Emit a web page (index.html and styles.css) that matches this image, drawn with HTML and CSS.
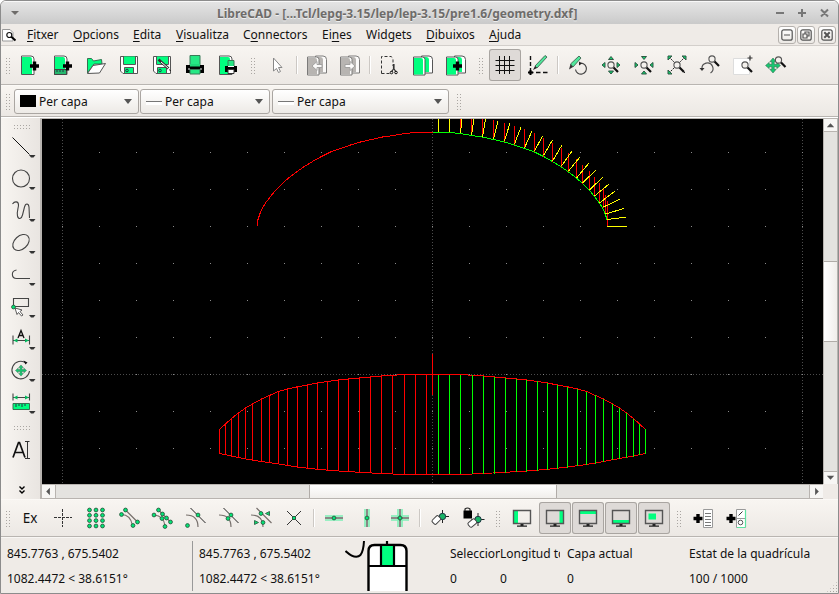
FILE: index.html
```html
<!DOCTYPE html>
<html lang="ca">
<head>
<meta charset="utf-8">
<title>LibreCAD</title>
<link rel="stylesheet" href="styles.css">
</head>
<body>
<svg class="defs" aria-hidden="true">
  <defs>
    <g id="node"><circle r="1.9" fill="#00e676" stroke="#2c5a40" stroke-width=".9"/></g>
    <g id="lens"><path d="M2.3 2.3L7 7" stroke="#111" stroke-width="2.2"/><circle r="3.1" fill="#f4f1ed" stroke="#555" stroke-width="1.1"/></g>
    <g id="pages"><path d="M14.5 7H22q3.500 0 3.500 3.500V24h-11z" fill="#fff" stroke="#555"/><path d="M15 8h4q3 0 3 3v12h-7z" class="tint"/><path d="M6.500 8h9q2.500 0 2.500 2.500V26H6.500z" fill="#fff" stroke="#555"/><path d="M7 9h7q2 0 2 2v14.500H7z" class="tint"/></g>
    <g id="screen"><path d="M7.500 8.500h17v13h-17z" fill="none" stroke="#555" stroke-width="1.400"/><path d="M14.500 22h3v1.500h3.500v1.300H11v-1.300h3.500z" fill="#222"/></g>
    <g id="drop"><path d="M24 24h6.500l-2 2.500h-2.500z" fill="#333"/></g>
    <g id="move"><path d="M0-6.200l2.600 3H1v2.200h2.200V-2.600l3 2.600-3 2.600V1H1v2.200h1.600L0 6.200l-2.600-3H-1V1h-2.200v1.600L-6.200 0l3-2.600V-1H-1v-2.200h-1.600z" fill="#18c872" stroke="#326b4e" stroke-width=".5"/></g>
    <g id="plus"><path d="M-1.700-4.500h3.400v2.800h2.800v3.400H1.700v2.800h-3.400V1.700h-2.800v-3.400h2.800z" fill="#000"/></g>
    <pattern id="grid" x="62" y="115" width="37" height="37" patternUnits="userSpaceOnUse"><path d="M0 0h1v1H0z" fill="#8a8a8a"/></pattern>
  </defs>
</svg>
<div class="window">
  <header class="titlebar">
    <svg class="wm-menu" viewBox="0 0 10 6"><path d="M1 1h8L5 5z"/></svg>
    <h1>LibreCAD - [...Tcl/lepg-3.15/lep/lep-3.15/pre1.6/geometry.dxf]</h1>
    <svg class="wm-buttons" viewBox="0 0 54 12"><path d="M1 6h8M23 6h8M27 2v8M46 2.500l7 7M53 2.500l-7 7"/></svg>
  </header>

  <nav class="menubar">
    <svg class="doc-icon" viewBox="0 0 15 15"><path d="M.5 1.500H8l3 3v8.500H.5z" fill="#fff" stroke="#999"/><path d="M9 8.500l4.500 4" stroke="#000" stroke-width="2"/><circle cx="7.300" cy="7" r="2.500" fill="#fff" stroke="#111" stroke-width="1.200"/></svg>
    <span class="m1"><u>F</u>itxer</span><span class="m2"><u>O</u>pcions</span><span class="m3"><u>E</u>dita</span><span class="m4"><u>V</u>isualitza</span><span class="m5">C<u>o</u>nnectors</span><span class="m6">Ei<u>n</u>es</span><span class="m7">Widgets</span><span class="m8"><u>D</u>ibuixos</span><span class="m9"><u>A</u>juda</span>
    <div class="mdi">
      <b><svg viewBox="0 0 12 12"><rect x=".8" y=".8" width="10.400" height="10.400" rx="2"/><path d="M3 6h6"/></svg></b>
      <b><svg viewBox="0 0 12 12"><rect x=".8" y=".8" width="10.400" height="10.400" rx="2"/><path d="M3 5h4v4H3zM5 5V3h4v4H7"/></svg></b>
      <b><svg viewBox="0 0 12 12"><rect x=".8" y=".8" width="10.400" height="10.400" rx="2"/><path d="M3.300 3.300l5.400 5.400M8.700 3.300L3.300 8.700" stroke-width="2"/></svg></b>
    </div>
  </nav>

  <section class="toolbar top">
    <i class="grip"></i>
    <svg class="icon" viewBox="0 0 32 32"><path d="M7.500 7H17q3 0 3 3v15.500H7.500z" fill="#fff" stroke="#555"/><path d="M8 8h8q2 0 2 2v15H8z" fill="#00ff7f"/><use href="#plus" x="20.500" y="17"/></svg>
    <svg class="icon" viewBox="0 0 32 32"><path d="M7.500 7H17q3 0 3 3v15.500H7.500z" fill="#fff" stroke="#555"/><path d="M8 8h8q2 0 2 2v15H8z" fill="#00ff7f"/><path d="M7.500 20.500h12v5h-12z" fill="#26b86e" stroke="#444"/><path d="M10 21v2M13 21v2M16 21v2" stroke="#234"/><use href="#plus" x="20.500" y="17"/></svg>
    <svg class="icon" viewBox="0 0 32 32"><path d="M7.500 24V9.500h4l2 2.500 8-1.500.5 4.500h-8z" fill="#00ff7f" stroke="#357152"/><path d="M7.500 24.500l5.500-8 12.500-2-6 9.500z" fill="#fff" stroke="#555"/></svg>
    <svg class="icon" viewBox="0 0 32 32"><path d="M7.500 7.500h17v17H10l-2.500-2.500z" fill="#fff" stroke="#555"/><path d="M11 7.500h11V15H11z" fill="#00ff7f"/><path d="M10.500 8v7.500h12V8" fill="none" stroke="#555"/><path d="M11.500 24.500v-6h9v6z" fill="#00ff7f" stroke="#555"/><circle cx="14" cy="21.500" r="1.300" fill="none" stroke="#234"/></svg>
    <svg class="icon" viewBox="0 0 32 32"><path d="M7.500 7.500h17v17H10l-2.500-2.500z" fill="#fff" stroke="#555"/><path d="M11 7.500h11V15H11z" fill="#00ff7f"/><path d="M10.500 8v7.500h12V8" fill="none" stroke="#555"/><path d="M11.500 24.500v-6h9v6z" fill="#00ff7f" stroke="#555"/><circle cx="14" cy="21.500" r="1.300" fill="none" stroke="#234"/><path d="M12.500 10.500l10 9" stroke="#333" stroke-width="2.600"/><path d="M15 13l7.500 6.500" stroke="#fff"/><path d="M23.500 20.500l1 1.500" stroke="#111"/></svg>
    <svg class="icon" viewBox="0 0 32 32"><path d="M11 17V6.500h10V17" fill="#26e884" stroke="#397b58"/><path d="M7 16h18v8H7z" fill="#000"/><path d="M11 15h10v2.500H11z" fill="#1fd879"/><path d="M11 25v-4.500h10V25z" fill="#26e884" stroke="#397b58"/><path d="M9 20h2M21 20h2" stroke="#eee"/></svg>
    <svg class="icon" viewBox="0 0 32 32"><path d="M7.500 7H17q3 0 3 3v15.500H7.500z" fill="#fff" stroke="#555"/><path d="M8 8h8q2 0 2 2v15H8z" fill="#00ff7f"/><path d="M16 17v-5.500h6V17" fill="#26e884" stroke="#397b58"/><path d="M13 17h12v6H13z"/><path d="M16 20.500h6v4h-6z" fill="#fff" stroke="#333"/><path d="M16 17.500h6" stroke="#fff"/></svg>
    <i class="grip"></i>
    <svg class="icon" viewBox="0 0 32 32"><path d="M12.500 9v13l3-2.500 2 4 2-1-2-4h3.500z" fill="#fff" stroke="#888"/></svg>
    <i class="sep"></i>
    <svg class="icon off" viewBox="0 0 32 32"><use href="#pages"/><path d="M11 17l5-4.500v3h5v3h-5v3z" fill="#fff" stroke="#888"/></svg>
    <svg class="icon off" viewBox="0 0 32 32"><use href="#pages"/><path d="M21 17l-5-4.500v3h-5v3h5v3z" fill="#fff" stroke="#888"/></svg>
    <i class="sep"></i>
    <svg class="icon" viewBox="0 0 32 32"><path d="M7.500 24.500V7.500H17q2 1 2 3.500V17" fill="none" stroke="#333" stroke-dasharray="3 2"/><path d="M7.500 24.500H17" stroke="#333" stroke-dasharray="3 2"/><path d="M19.500 15v4l2.500 4M20 15v4l-2.500 4" fill="none" stroke="#333" stroke-width="1.200"/><circle cx="17.500" cy="23.500" r="1.300" fill="none" stroke="#111"/><circle cx="22" cy="23.500" r="1.300" fill="none" stroke="#111"/></svg>
    <svg class="icon" viewBox="0 0 32 32"><use href="#pages"/></svg>
    <svg class="icon" viewBox="0 0 32 32"><use href="#pages"/><use href="#plus" x="17.500" y="17"/></svg>
    <i class="grip"></i>
    <svg class="icon checked" viewBox="0 0 32 32"><path d="M10.500 7v18M15.500 7v18M20.500 7v18M6.500 11.500h19M6.500 16.500h19M6.500 21.500h19" stroke="#111"/></svg>
    <svg class="icon" viewBox="0 0 32 32"><path d="M8.500 7v16" stroke="#111" stroke-width="1.400" stroke-dasharray="4 2"/><path d="M7 23.500h19" stroke="#111" stroke-width="1.500" stroke-dasharray="4.500 2.500"/><path d="M8.500 21v5M6 23.500h5" stroke="#000" stroke-width="2"/><path d="M13 17L23 6.500l2 1.500-10 11z" fill="#50e69a" stroke="#345344" stroke-width=".8"/><path d="M15 19l-4 2 2-4" fill="#222"/></svg>
    <i class="sep"></i>
    <svg class="icon" viewBox="0 0 32 32"><path d="M8.500 15L17 7l2 2-8 9z" fill="#50e69a" stroke="#345344" stroke-width=".8"/><path d="M11 18l-4 2.500L8.500 15z" fill="#333"/><path d="M17 14.500a5.500 5.500 0 1 1-3.500 6" fill="none" stroke="#444" stroke-width="1.200"/><path d="M17 12.500l3 2-3 2z" fill="#222"/></svg>
    <svg class="icon" viewBox="0 0 32 32"><g fill="#10ce6d" stroke="#315744"><path d="M16 7.500l2.500 3h-5zM16 25l2.500-3h-5zM7 16l3-2.500v5zM25 16l-3-2.500v5z"/></g><use href="#lens" x="16" y="16"/></svg>
    <svg class="icon" viewBox="0 0 32 32"><g fill="#10ce6d" stroke="#315744"><path d="M16 10.500l2.500-3h-5zM16 22l2.500 3h-5zM10 16l-3-2.500v5zM22 16l3-2.500v5z"/></g><use href="#lens" x="16" y="16"/></svg>
    <svg class="icon" viewBox="0 0 32 32"><path d="M8 8l16 16M24 8L8 24" stroke="#222" stroke-dasharray="2 1"/><g fill="#10ce6d" stroke="#315744"><path d="M7 7h4l-4 4zM25 7h-4l4 4zM7 25h4l-4-4z"/></g><use href="#lens" x="16" y="16"/></svg>
    <svg class="icon" viewBox="0 0 32 32"><path d="M8 20a5.500 5.500 0 1 1 8.500 4" fill="none" stroke="#555" stroke-width="1.200"/><path d="M5.500 19h5L8 22z" fill="#333"/><use href="#lens" x="18" y="10"/></svg>
    <svg class="icon" viewBox="0 0 32 32"><path d="M6.500 9.500h16v16h-16z" fill="#fff" stroke="#ddd"/><use href="#lens" x="18" y="16"/><path d="M23 6.500v5M20.500 9h5" stroke="#333" stroke-width="1.200"/></svg>
    <svg class="icon" viewBox="0 0 32 32"><g transform="translate(13 16.500) scale(1.200)"><use href="#move"/></g><use href="#lens" x="18.500" y="11"/></svg>
  </section>

  <section class="toolbar pens">
    <i class="grip"></i>
    <div class="combo c1"><i class="swatch"></i>Per capa<i class="arrow"></i></div>
    <div class="combo c2"><i class="line"></i>Per capa<i class="arrow"></i></div>
    <div class="combo c3"><i class="line"></i>Per capa<i class="arrow"></i></div>
    <i class="grip"></i>
  </section>

  <main>
    <aside>
      <i class="grip wide"></i>
      <svg class="icon" viewBox="0 0 32 32"><path d="M7.500 6.500l17 17" stroke="#111"/><use href="#drop"/></svg>
      <svg class="icon" viewBox="0 0 32 32"><circle cx="16" cy="15.500" r="8.500" class="ln"/><use href="#drop"/></svg>
      <svg class="icon" viewBox="0 0 32 32"><path d="M7.500 9c2-3 6-3 6 1 0 3-2 7-1 11 1 4 4 3 5-1l2-8c1-4 4-4 4.500 0l.5 11" class="ln"/><use href="#drop"/></svg>
      <svg class="icon" viewBox="0 0 32 32"><ellipse cx="16" cy="15.500" rx="9.500" ry="6.500" transform="rotate(-43 16 15.500)" class="ln"/><use href="#drop"/></svg>
      <svg class="icon" viewBox="0 0 32 32"><path d="M11.500 11c-6 1-5 8.500 0 8.500H25" class="ln"/><use href="#drop"/></svg>
      <svg class="icon" viewBox="0 0 32 32"><path d="M8.500 7.500h15v8h-15z" class="ln"/><path d="M10 17l7 2-2 1.500 3 3.500-1.500 1-3-3.500-1.500 2z" fill="#fff" stroke="#333" stroke-width=".8"/><use href="#node" x="8.500" y="16"/><use href="#drop"/></svg>
      <svg class="icon" viewBox="0 0 32 32"><path d="M8 12.500v9M24.500 12.500v9M8 17.500h16" class="ln"/><path d="M8.500 17.500l4-2v4zM24 17.500l-4-2v4z" fill="#00b85c"/><path d="M13 15l3-7.500 3 7.500M14.200 12.500h3.600" fill="none" stroke="#111" stroke-width="1.300"/><use href="#drop"/></svg>
      <svg class="icon" viewBox="0 0 32 32"><path d="M21 8a8.800 8.800 0 1 0 3.500 8" class="ln"/><path d="M18.500 5.500l4 2-2 2z" fill="#111"/><g transform="translate(16 15.500) scale(.9)"><use href="#move"/></g><use href="#drop"/></svg>
      <svg class="icon" viewBox="0 0 32 32"><path d="M8 6.500v7M24.500 6.500v7M8 10.500h16" class="ln"/><path d="M8.500 10.500l4-2v4zM24 10.500l-4-2v4z" fill="#00b85c"/><path d="M8 16.500h16.500v6H8z" fill="#00ff7f" stroke="#357152"/><path d="M11 17v3M14 17v2M17 17v3M20 17v2" stroke="#234"/><use href="#drop"/></svg>
      <i class="grip wide"></i>
      <svg class="icon" viewBox="0 0 32 32"><path d="M8 23.500L13.500 8.500h1L20 23.500M10 18.500h8" fill="none" stroke="#111" stroke-width="1.700"/><path d="M20 7.500h4.500M22.500 7.500v17M20 24.500h5" fill="none" stroke="#333"/></svg>
      <svg class="more" viewBox="0 0 8 8"><path d="M1.500.5L4 3 6.500.5M1.500 4.500L4 7l2.500-2.500"/></svg>
    </aside>
    <div class="view">
      <svg class="drawing" viewBox="42 119 781 365" shape-rendering="crispEdges">
        <path d="M42 119h781v365H42z" fill="#000"/>
        <path d="M62.500 119v365M432.500 119v365M802.500 119v365M42 374.500h781" stroke="#4c4c4c" stroke-dasharray="1 2"/>
        <path d="M42 119h781v365H42z" fill="url(#grid)"/>
        <g fill="none" stroke-width="1">
          <path stroke="#f00" d="M432.500 132.500H415L404.500 133.500 393.500 135.500 382.500 137 371.500 139.500 360.500 142 350.500 145 340.500 148.500 330.500 152 321.500 156.500 312.500 161.500 303.500 167 296.500 172 288.500 178 282.500 183.500 275.500 190.500 270.500 196.500 265.500 203 261.500 209.500 259.500 215 257.500 221V226"/>
          <path stroke="#0f0" d="M432.500 132.500H450L460.500 133.500 471.500 135.500 482.500 137 493.500 139.500 504.500 142 514.500 145 524.500 148.500 534.500 152 543.500 156.500 552.500 161.500 561.500 167 568.500 172 576.500 178 582.500 183.500 589.500 190.500 594.500 196.500 599.500 203 603.500 209.500 605.500 215 607.500 221V226"/>
          <path stroke="#f00" d="M460.500 133v-14M471.500 135v-16M482.500 137v-18M493.500 139v-19M504.500 142v-19M514.500 145v-19M524.500 148v-19M534.500 152v-19M543.500 157v-19M552.500 162v-19M561.500 167v-19M568.500 172v-19M576.500 178v-19M582.500 184v-19M589.500 190v-19M594.500 196v-19M599.500 202v-19M603.500 208v-19M605.500 214v-19M607.500 226v-25"/>
          <path stroke="#ff0" d="M438.500 132v-13M449.500 132v-13M460.500 133l1.500-14M471.500 135l2.500-16M482.500 137l3-18M493.500 139l4.500-18M504.500 141l5.500-18M514.500 144l6.500-17M524.500 148l7.500-17M534.500 151l8-15M543.500 155.500l9-15.500M552.500 161l9.500-16M561.500 166l10.500-15M568.500 171l11.500-14M576.500 178l12.500-15M582.500 183l13.500-13M589.500 190l13.500-13M594.500 196l14.500-12M599.500 203l15.500-12M603.500 207l16.500-8M605.500 214l18.500-5.500M607.500 219.500l18.500-2.500M607 226.500h20"/>
          <path stroke="#f00" d="M219.500 453.500V429.500M225.500 455V424M231.500 456V418.500M238.500 457V413M245.500 459V408M252.500 460V404M261.500 461V399M269.500 463V395M278.500 464V391.500M287.500 466V389M297.500 467.500V387M307.500 468V385M317.500 469V383M327.500 470V381M338.500 471V380M348.500 471.500V379M359.500 472V378M370.500 473V377M381.500 473.500V376M392.500 474V375M404.500 474V374M415.500 474V374M426.500 474V374M432.500 354v41"/>
          <path stroke="#f00" d="M219.500 453.500V429.500L225.500 424 231.500 418.500 238.500 413 245.500 408 252.500 404 261.500 399 269.500 395.500 278.500 391.500 287.500 389 297.500 386.800 307.500 385 317.500 383 327.500 381.500 338.500 380 348.500 379 359.500 378 370.500 377 381.500 376 392.500 375.300 404.500 374.500H460.500L472.500 375.300 483.500 376 494.500 377 505.500 378 516.500 379 526.500 380 537.500 381.500 547.500 383 557.500 385 567.500 386.800 577.500 389 586.500 391.500 595.500 395.500 603.500 399 612.500 404 619.500 408 626.500 413 633.500 418.500 639.500 424 645.500 429.500"/>
          <path stroke="#f00" d="M219.500 453.500L231.500 456 245.500 459 261.500 461.500 278.500 464 297.500 467 317.500 469.300 338.500 471 359.500 472.300 381.500 473.500 404.500 474.500H460.500L483.500 473.500 505.500 472.300 526.500 471 547.500 469.300 567.500 467 586.500 464.500 603.500 461.500 619.500 458.500 633.500 456 645.500 453.500"/>
          <path stroke="#0f0" d="M438.500 375v99M449.500 375v99M460.500 375v99M472.500 375v99M483.500 376v98M494.500 377v97M505.500 378v95M516.500 379v93M526.500 380v92M537.500 381v90M547.500 383v87M557.500 385v84M567.500 387v81M577.500 389v77M586.500 392v73M595.500 395v69M603.500 399v63M612.500 404v56M619.500 408v51M626.500 413v45M633.500 419v38M639.500 424v31M645.500 429v25"/>
        </g>
      </svg>
      <div class="vscroll"><svg viewBox="0 0 14 13"><path d="M3 9h8L7 4.500z"/></svg><i></i><b></b><i></i><svg viewBox="0 0 14 13"><path d="M3 4h8L7 8.500z"/></svg></div>
      <div class="hscroll"><svg viewBox="0 0 13 14"><path d="M8 3v8L4 7z"/></svg><i></i><b></b><i></i><svg viewBox="0 0 13 14"><path d="M5 3v8l4-4z"/></svg></div>
      <div class="corner"></div>
    </div>
  </main>

  <section class="toolbar snap">
    <i class="grip"></i>
    <span class="icon ex">Ex</span>
    <svg class="icon" viewBox="0 0 32 32"><path d="M7 15.500h18M15.500 7v18" stroke="#333" stroke-dasharray="3 1"/></svg>
    <svg class="icon" viewBox="0 0 32 32"><use href="#node" x="9.500" y="8"/><use href="#node" x="16" y="8"/><use href="#node" x="22.500" y="8"/><use href="#node" x="9.500" y="13.300"/><use href="#node" x="16" y="13.300"/><use href="#node" x="22.500" y="13.300"/><use href="#node" x="9.500" y="18.600"/><use href="#node" x="16" y="18.600"/><use href="#node" x="22.500" y="18.600"/><use href="#node" x="9.500" y="24"/><use href="#node" x="16" y="24"/><use href="#node" x="22.500" y="24"/></svg>
    <svg class="icon" viewBox="0 0 32 32"><path d="M12.500 8l12 12M8.500 12.500q9 0 11 11" class="gr"/><use href="#node" x="12.500" y="8"/><use href="#node" x="8.500" y="12.500"/><use href="#node" x="24.500" y="20"/><use href="#node" x="20" y="23.500"/></svg>
    <svg class="icon" viewBox="0 0 32 32"><path d="M12.500 8l12 12M8 13q10 1 11 11" class="gr"/><use href="#node" x="12.500" y="8"/><use href="#node" x="8" y="13"/><use href="#node" x="16.500" y="12"/><use href="#node" x="20.500" y="16"/><use href="#node" x="16" y="16.500"/><use href="#node" x="24.500" y="20"/><use href="#node" x="19" y="24.500"/></svg>
    <svg class="icon" viewBox="0 0 32 32"><path d="M11.500 6l15 15" stroke="#222"/><path d="M7 13q12 0 12 12" class="gr"/><use href="#node" x="19" y="13"/><use href="#node" x="8.500" y="23.500"/></svg>
    <svg class="icon" viewBox="0 0 32 32"><path d="M11.500 6l15 15" stroke="#222"/><path d="M7 13q12 0 12 12" class="gr"/><use href="#node" x="19" y="13"/><use href="#node" x="16" y="16.500"/></svg>
    <svg class="icon" viewBox="0 0 32 32"><path d="M11.500 6l15 15M6 13q12 0 12 12" class="gr"/><use href="#node" x="16" y="11.500"/><use href="#node" x="18" y="20.500"/><path d="M24.500 9.500v4l-4-2zM9.500 18.500v4l4-2z" fill="#0bdc6e" stroke="#357152"/></svg>
    <svg class="icon" viewBox="0 0 32 32"><path d="M9 9l14 14M23 9L9 23" stroke="#333"/><path d="M14.500 14.500h3v3h-3z" fill="#00e676" stroke="#2c5a40"/></svg>
    <i class="sep"></i>
    <svg class="icon" viewBox="0 0 32 32"><path d="M7 14h18M7 18h18" class="glow"/><path d="M7 16h18" stroke="#222"/><use href="#node" x="16" y="16"/></svg>
    <svg class="icon" viewBox="0 0 32 32"><path d="M14 7v18M18 7v18" class="glow"/><path d="M16 7v18" stroke="#222"/><use href="#node" x="16" y="16"/></svg>
    <svg class="icon" viewBox="0 0 32 32"><path d="M14 7v18M18 7v18M7 14h18M7 18h18" class="glow"/><path d="M16 7v18M7 16h18" stroke="#222"/><use href="#node" x="16" y="16"/></svg>
    <i class="sep"></i>
    <svg class="icon" viewBox="0 0 32 32"><path d="M18.500 8v13M12 14.500h13" stroke="#222"/><circle cx="18.500" cy="14.500" r="3.200" fill="#17b466" stroke="#234"/><rect x="8" y="15.500" width="8.500" height="5.500" rx="1.500" transform="rotate(-45 12 18)" fill="#fff" stroke="#444"/></svg>
    <svg class="icon" viewBox="0 0 32 32"><path d="M21 11v13M14.500 17.500h13" stroke="#222"/><circle cx="21" cy="17.500" r="3.200" fill="#17b466" stroke="#234"/><rect x="11" y="18.500" width="8.500" height="5.500" rx="1.500" transform="rotate(-40 15 21)" fill="#fff" stroke="#444"/><path d="M6.500 8.500H15v8H6.500z"/><path d="M8 9V7q2.500-2 5 0v2" fill="none" stroke="#222" stroke-width="1.200"/></svg>
    <i class="grip"></i>
    <svg class="icon" viewBox="0 0 32 32"><path d="M8 9h4v12H8z" fill="#00ff7f"/><use href="#screen"/></svg>
    <svg class="icon checked" viewBox="0 0 32 32"><path d="M20.500 9h3.500v12h-3.500z" fill="#00ff7f"/><use href="#screen"/></svg>
    <svg class="icon checked" viewBox="0 0 32 32"><path d="M8 9h16v3H8z" fill="#00ff7f"/><use href="#screen"/></svg>
    <svg class="icon checked" viewBox="0 0 32 32"><path d="M8 18h16v3H8z" fill="#00ff7f"/><use href="#screen"/></svg>
    <svg class="icon checked" viewBox="0 0 32 32"><path d="M10.500 11.500H18v6h-7.500z" fill="#00ff7f"/><use href="#screen"/></svg>
    <i class="grip"></i>
    <svg class="icon" viewBox="0 0 32 32"><path d="M16.500 7.500h9v18h-9z" fill="#fff" stroke="#999"/><path d="M18 11.500h6M18 14.500h6M18 17.500h6M18 20.500h6M18 23.500h6" stroke="#555" stroke-width=".8"/><use href="#plus" x="11" y="16.500"/></svg>
    <svg class="icon" viewBox="0 0 32 32"><path d="M16.500 7.500h9v18h-9zM16.500 16.500h9" fill="#fff" stroke="#999"/><path d="M25.500 8v17M17 25.500h8" stroke="#5be3a0" stroke-width="1.200"/><path d="M18.500 13.500l4-4" stroke="#333"/><circle cx="20.500" cy="20.500" r="2.300" fill="none" stroke="#555"/><use href="#plus" x="11" y="16.500"/></svg>
  </section>

  <footer>
    <div class="pair abs"><span>845.7763 , 675.5402</span><span>1082.4472 &lt; 38.6151°</span></div>
    <div class="pair rel"><span>845.7763 , 675.5402</span><span>1082.4472 &lt; 38.6151°</span></div>
    <svg class="mouse" viewBox="345 541 64 50"><path d="M345.500 551q10 9 15 4 3-4 3.500-14" fill="none" stroke="#000" stroke-width="2"/><path d="M368.500 595v-44q0-6 6-6h26q6 0 6 6v44z" fill="#fff" stroke="#000" stroke-width="2.400"/><path d="M381 546h13v20h-13z" fill="#00ff7f"/><path d="M368 566h38M381 546v20M394 546v20M387 541v5" stroke="#000" stroke-width="2.200" fill="none"/></svg>
    <div class="pair sel"><span>Seleccion</span><span>0</span></div>
    <div class="pair len"><span>Longitud to</span><span>0</span></div>
    <div class="pair layer"><span>Capa actual</span><span>0</span></div>
    <div class="pair gridstate"><span>Estat de la quadrícula</span><span>100 / 1000</span></div>
    <i class="resize"></i>
  </footer>
</div>
</body>
</html>
```
FILE: styles.css
```css
* { box-sizing: border-box; }
body { margin: 0; background: #fff; font: 12px "Noto Sans", sans-serif; color: #111; }
.defs { position: absolute; width: 0; height: 0; }
.window { width: 839px; height: 594px; overflow: hidden; display: flex; flex-direction: column; border: 1px solid #8c8c8c; border-radius: 6px 6px 0 0; background: #efebe7; }

.titlebar { height: 23px; flex: none; display: grid; grid-template-columns: 207px 1fr 54px; align-items: center; padding: 0 9px; background: linear-gradient(#e4e4e4, #cacaca); border-top: 1px solid #f8f8f8; }
.titlebar h1 { margin: 2px 0 0; font-size: 12px; line-height: 20px; font-weight: 700; letter-spacing: .02px; color: #6e6c6a; white-space: nowrap; text-shadow: 0 1px #eee; }
.wm-menu { width: 10px; height: 6px; fill: #6e6c6a; }
.wm-buttons { width: 54px; height: 12px; fill: none; stroke: #777; stroke-width: 2; }

.menubar { height: 21px; flex: none; display: grid; grid-template-columns: 25px 46px 60px 43px 67px 79px 44px 60px 63px 1fr 60px; align-items: center; padding-left: 1px; line-height: 20px; white-space: nowrap; }
.menubar u { text-underline-offset: 2px; text-decoration-thickness: 1px; }
.doc-icon { width: 15px; height: 15px; margin-top: 2px; }
.mdi { display: flex; gap: 1px; justify-content: flex-end; padding-right: 2px; }
.mdi b { width: 18px; height: 18px; display: flex; align-items: center; justify-content: center; border: 1px solid #b5b1ad; border-radius: 3px; background: linear-gradient(#fff, #ece9e5); }
.mdi b:last-child { margin-left: 2px; }
.mdi svg { width: 12px; height: 12px; fill: none; stroke: #555; stroke-width: 1.2; }

.toolbar { flex: none; display: flex; align-items: center; background: linear-gradient(#f8f5f1, #ece8e4); border-top: 1px solid #d3cfcb; border-bottom: 1px solid #b9b5b1; }
.toolbar.top { height: 40px; }
.toolbar.pens { height: 32px; border-top-color: #fbf9f6; }
.toolbar.snap { height: 38px; border-top-color: #fbf9f6; }
.icon { display: block; width: 32px; height: 32px; flex: none; margin-right: 1px; }
.icon.checked { background: #dedad7; box-shadow: inset 0 0 0 1px #a9a5a1; border-radius: 3px; }
.tint { fill: var(--tint, #00ff7f); }
.off { --tint: #a5a29f; opacity: .75; }
.ex { font-size: 13.5px; line-height: 32px; text-align: center; }
.ln { fill: none; stroke: #444; stroke-width: 1.1; }
.gr { fill: none; stroke: #77706c; stroke-width: 1.2; }
.glow { stroke: #7df0b6; stroke-width: 1.6; }
.sep { width: 2px; height: 18px; margin: 0 3px 0 2px; background: linear-gradient(90deg, #ccc8c4 50%, #fff 50%); }
.grip { width: 6px; height: 17px; flex: none; margin: 0 5px; background: radial-gradient(circle, #aaa6a2 .6px, transparent .9px) 0 0 / 3px 3px; }
.toolbar > .grip:first-child { margin: 0 3px 0 4px; }

.combo { height: 25px; flex: none; display: flex; align-items: center; padding: 0 6px 0 5px; margin-right: 2px; border: 1px solid #aaa6a2; border-radius: 3px; background: linear-gradient(#fff, #edeae6); }
.c1 { width: 125px; margin-right: 1px; }
.c2 { width: 130px; }
.c3 { width: 177px; }
.swatch { width: 16px; height: 12px; margin-right: 3px; background: #000; }
.line { width: 16px; height: 4px; margin: 3px 3px 0 0; border-top: 1px solid #777; background: #fff; }
.arrow { margin-left: auto; border: 4px solid transparent; border-top: 5px solid #555; border-bottom: 0; }

main { height: 382px; flex: none; display: flex; border-top: 1px solid #fff; }
aside { width: 39px; flex: none; padding: 6px 0 0 4px; background: linear-gradient(90deg, #f8f5f1, #e9e5e1); }
aside .icon { margin: 0; }
.grip.wide { display: block; width: 18px; height: 6px; margin: 0 0 1px 8px; }
.icon + .grip.wide { margin: 6px 0 3px 8px; }
.more { display: block; width: 8px; height: 8px; margin: 20px 0 0 13px; fill: none; stroke: #000; stroke-width: 1.4; }
.view { flex: 1; display: grid; grid-template: 365px 15px / 781px 15px; border-left: 2px solid #b8b4b0; border-top: 1px solid #b8b4b0; }
.drawing { display: block; width: 781px; height: 365px; }
.vscroll, .hscroll { display: flex; background: #e4e3e0; }
.vscroll { flex-direction: column; border: solid #b8b4b0; border-width: 0 1px; }
.hscroll { border: solid #b8b4b0; border-width: 1px 0; }
.vscroll svg, .hscroll svg { flex: none; width: 13px; height: 13px; fill: #555; background: #f7f6f4; }
.vscroll svg:first-child { border-bottom: 1px solid #b8b4b0; }
.vscroll svg:last-child { border-top: 1px solid #b8b4b0; }
.hscroll svg:first-child { width: 14px; border-right: 1px solid #b8b4b0; }
.hscroll svg:last-child { width: 14px; border-left: 1px solid #b8b4b0; }
.vscroll b { height: 81px; background: linear-gradient(90deg, #fff, #f0eeeb); border: solid #b0aca8; border-width: 1px 0; }
.hscroll b { width: 248px; background: linear-gradient(#fff, #f0eeeb); border: solid #b0aca8; border-width: 0 1px; }
.vscroll i, .hscroll i { flex: 1; }
.vscroll i:nth-child(2) { flex: none; height: 129px; }
.hscroll i:nth-child(2) { flex: none; width: 253px; }

footer { flex: 1; display: grid; grid-template-columns: 192px 152px 105px 50px 60px 129px 1fr 12px; border-top: 1px solid #f8f6f4; padding-top: 3px; }
.pair { display: flex; flex-direction: column; height: 50px; line-height: 25px; white-space: nowrap; overflow: hidden; }
.pair.abs { padding-left: 6px; border-right: 1px solid #999; }
.pair.rel { padding-left: 6px; }
.pair.layer { padding-left: 7px; }
.mouse { display: block; width: 64px; height: 50px; }
.resize { align-self: end; width: 12px; height: 12px; background: radial-gradient(circle, #aaa6a2 .6px, transparent .9px) 0 0 / 3px 3px; clip-path: polygon(100% 0, 100% 100%, 0 100%); }
```
